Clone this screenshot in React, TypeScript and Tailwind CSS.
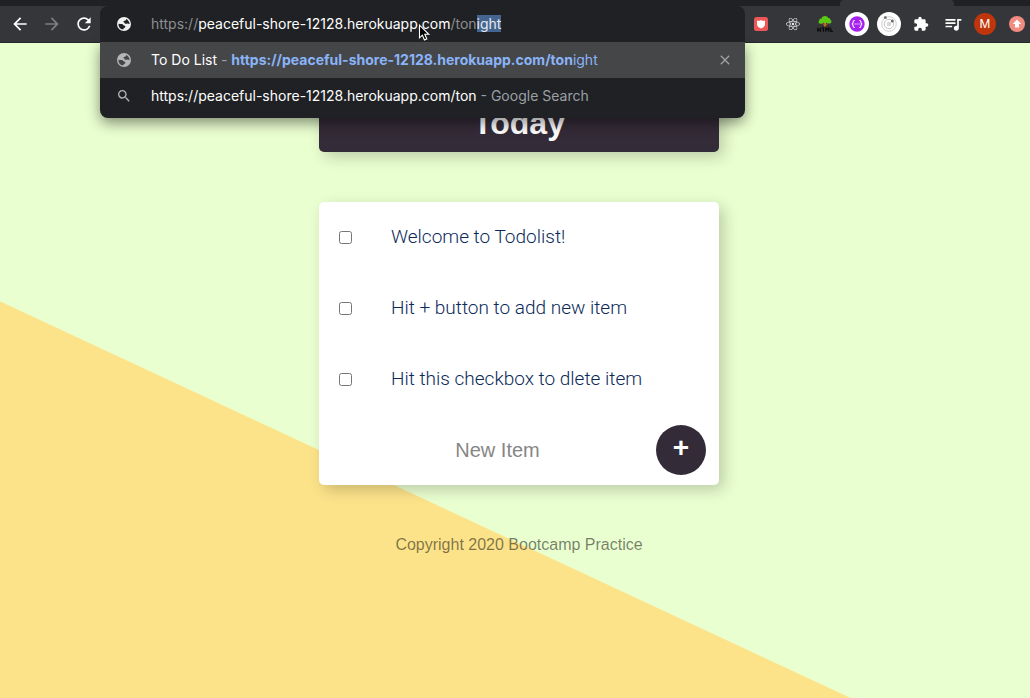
import { useState, type ReactNode } from "react";
import {
  MdArrowBack,
  MdArrowForward,
  MdClose,
  MdExtension,
  MdQueueMusic,
  MdRefresh,
  MdSearch,
} from "react-icons/md";
import { FaReact } from "react-icons/fa";

const ITEMS = [
  "Welcome to Todolist!",
  "Hit + button to add new item",
  "Hit this checkbox to dlete item",
];

function ToolButton({ label, children }: { label: string; children: ReactNode }) {
  return (
    <button
      type="button"
      aria-label={label}
      className="flex h-9 w-8 shrink-0 items-center justify-center text-white"
    >
      {children}
    </button>
  );
}

function GlobeIcon({ className }: { className: string }) {
  return (
    <svg width="16" height="16" viewBox="0 0 16 16" className={className}>
      <path
        fillRule="evenodd"
        fill="currentColor"
        d="M8 1a7 7 0 1 0 0 14A7 7 0 0 0 8 1Zm2 1.900c2.100.8 3.500 2.700 3.600 5-.7.300-1.300-.4-2-.5-.8 0-1.300.5-2.200.3-.9-.3-.8-1.200-1.500-1.500-.6-.3-.6-1 0-1.300.6-.4 1.400-.2 1.900-.7.4-.4.200-.9.200-1.300ZM2.500 7.700c1.100.2 2.200.1 3.400.3 1.200.3 1.300 1.300 2.200 1.500.9.100 1.400.5 1.200 1.400-.2.800-1.100.9-1.600 1.400-.3.400-.2.900-.4 1.300A5.700 5.700 0 0 1 2.500 7.700Z"
      />
    </svg>
  );
}

function ShieldIcon() {
  return (
    <svg width="14" height="14" viewBox="0 0 14 14">
      <rect width="14" height="14" rx="2.5" fill="#ef5658" />
      <path d="M3 3.600 5 4l2-1 2 1 2-.4v4C11 9.500 9 10.700 7 11.600 5 10.700 3 9.500 3 7.600Z" fill="#fff" />
    </svg>
  );
}

function TreeIcon() {
  return (
    <svg width="18" height="18" viewBox="0 0 18 18">
      <path d="M8 7h2.200l-.3 5 1.900 1.800H6.600L8.300 12Z" fill="#c9701c" />
      <path d="m6 7.500 2.500 3M12.500 7.500l-2.500 3" stroke="#b5621a" />
      <path
        d="M9 1C7 1 5.800 2.100 5.500 3.500 3.800 3.600 3 4.600 3.200 5.800 2.200 6.500 2.300 8.600 4.300 8.800c1.400.2 2-.6 3-1 1.300.6 2.600.6 3.600 0 1.400 1.200 3.600 1 4.300-.4.6-1.200 0-2.200-.9-2.600C14.400 3.600 13.400 2.900 12.300 3 11.800 1.700 10.600 1 9 1Z"
        fill="#5cc815"
      />
      <path
        d="M1.800 12.800v4m2.600-4v4m-2.600-2h2.600m1.300-2h3.400m-1.700 0v4m2.400 0v-4l1.500 1.700 1.500-1.700v4m2-4v3.500h2.200"
        stroke="#0c0c0e"
        strokeWidth="1.300"
        fill="none"
      />
    </svg>
  );
}

function BracesIcon() {
  return (
    <svg width="24" height="24" viewBox="0 0 24 24">
      <circle cx="12" cy="12" r="12" fill="#fff" />
      <circle cx="12" cy="12" r="7.700" fill="#a421ef" />
      <path
        d="M9.800 8.500c-1.500 0-1.700.6-1.700 1.600 0 1.200-.3 1.700-1.300 1.900 1 .2 1.300.7 1.300 1.900 0 1 .2 1.600 1.700 1.600m4.400-7c1.500 0 1.700.6 1.700 1.600 0 1.200.3 1.700 1.300 1.900-1 .2-1.300.7-1.300 1.900 0 1-.2 1.600-1.700 1.600"
        stroke="#fff"
        strokeWidth="1.100"
        fill="none"
      />
      <path d="M9.500 12h1.200m.8 0h1.200m.8 0h1.200" stroke="#fff" strokeWidth="1.200" />
    </svg>
  );
}

function OrbitIcon() {
  return (
    <svg width="24" height="24" viewBox="0 0 24 24">
      <circle cx="12" cy="12" r="12" fill="#fff" />
      <circle cx="12" cy="12" r="7.300" fill="none" stroke="#cfcfcf" />
      <circle cx="12" cy="12" r="4.700" fill="none" stroke="#c4c4c4" />
      <circle cx="12" cy="12" r="2.300" fill="#d6d6d6" />
      <circle cx="8.300" cy="5.600" r="1.500" fill="#777" />
      <circle cx="15.300" cy="9" r="1.500" fill="#6a6a6a" />
    </svg>
  );
}

function UpdateIcon() {
  return (
    <svg width="16" height="16" viewBox="0 0 16 16">
      <circle cx="8" cy="8" r="8" fill="#f28b82" />
      <path d="M8 3.500 12.200 8H10v3.500H6V8H3.800Z" fill="#fff" />
    </svg>
  );
}

function Pointer() {
  return (
    <svg
      className="pointer-events-none absolute top-[18px] left-[318px] z-20"
      width="13"
      height="18"
      viewBox="0 0 13 18"
    >
      <path
        d="M1.500 1.200v12.600l2.900-2.700 2 4.900 2.400-1-2-4.700h4Z"
        fill="#000"
        stroke="#fff"
        strokeWidth="1.100"
      />
    </svg>
  );
}

function AddressBar() {
  const [url, setUrl] = useState("https://peaceful-shore-12128.herokuapp.com/tonight");
  const parts = /^(https:\/\/)([^/]*)(\/ton)?(.*)$/.exec(url) ?? ["", "", url, "", ""];

  return (
    <div className="relative min-w-0 flex-1 text-sm">
      <div className="relative z-10 flex h-9 items-center rounded-t-lg bg-[#202124] pr-3 pl-4">
        <GlobeIcon className="shrink-0 text-[#f1f1f1]" />
        <div className="ml-[19px] grid flex-1 items-center">
          <div aria-hidden="true" className="col-start-1 row-start-1 whitespace-pre text-[#8d8e91]">
            {parts[1]}
            <span className="text-white">{parts[2]}</span>
            {parts[3]}
            <span className="bg-[#44658f] text-[#e8eaed]">{parts[4]}</span>
          </div>
          <input
            aria-label="Address and search bar"
            value={url}
            onChange={(e) => setUrl(e.target.value)}
            className="col-start-1 row-start-1 w-full bg-transparent text-transparent caret-white outline-none"
          />
        </div>
      </div>
      <ul className="absolute inset-x-0 top-9 rounded-b-lg bg-[#202124] pb-1 shadow-[0_5px_14px_rgba(0,0,0,0.45)]">
        <li className="flex h-9 items-center bg-[#454648] pr-3 pl-4">
          <GlobeIcon className="shrink-0 text-[#b4b5b6]" />
          <a href="#todo" className="ml-[19px] flex-1 whitespace-pre text-white">
            To Do List<span className="text-[#9aa0a6]"> - </span>
            <span className="text-[#8ab4f8]">
              <b>https://peaceful-shore-12128.herokuapp.com/ton</b>ight
            </span>
          </a>
          <button type="button" aria-label="Remove suggestion" className="text-[#a0a1a3]">
            <MdClose size={16} />
          </button>
        </li>
        <li className="flex h-9 items-center pr-3 pl-4">
          <MdSearch size={16} className="shrink-0 text-[#b4b5b6]" />
          <a href="#search" className="ml-[19px] flex-1 whitespace-pre text-white">
            https://peaceful-shore-12128.herokuapp.com/ton
            <span className="text-[#9aa0a6]"> - Google Search</span>
          </a>
        </li>
      </ul>
      <Pointer />
    </div>
  );
}

function BrowserBar() {
  return (
    <header className="relative z-10 border-b border-[#28252b] bg-[#35363a] font-['Inter',sans-serif]">
      <div className="flex h-[6px] justify-end bg-[#202124]">
        <div className="mr-[76px] w-[114px] rounded-t-sm bg-[#35363a]" />
      </div>
      <div className="flex h-9 pl-1">
        <ToolButton label="Back"><MdArrowBack size={20} /></ToolButton>
        <ToolButton label="Forward"><MdArrowForward size={20} className="text-[#7d7f83]" /></ToolButton>
        <ToolButton label="Reload"><MdRefresh size={20} /></ToolButton>
        <AddressBar />
        <ToolButton label="Shield"><ShieldIcon /></ToolButton>
        <ToolButton label="React tools"><FaReact size={14} className="text-[#e3e4e5]" /></ToolButton>
        <ToolButton label="HTML tree"><TreeIcon /></ToolButton>
        <ToolButton label="JSON viewer"><BracesIcon /></ToolButton>
        <ToolButton label="Orbit"><OrbitIcon /></ToolButton>
        <ToolButton label="Extensions"><MdExtension size={16} /></ToolButton>
        <ToolButton label="Media"><MdQueueMusic size={20} /></ToolButton>
        <ToolButton label="Profile">
          <span className="flex size-[22px] items-center justify-center rounded-full bg-[#bf360c] text-xs">
            M
          </span>
        </ToolButton>
        <button type="button" aria-label="Update" className="w-[29px] shrink-0 pl-2">
          <UpdateIcon />
        </button>
      </div>
    </header>
  );
}

export default function App() {
  return (
    <div className="flex min-h-screen flex-col">
      <BrowserBar />
      <main className="flex flex-1 flex-col items-center bg-[linear-gradient(25deg,#fce38a_359px,#eaffd0_360px)] pr-4 pl-6 font-['Liberation_Sans',Arial,sans-serif]">
        <div className="w-full max-w-[400px] rounded-b-[5px] bg-[#342b38] pt-[60px] pb-[9px] text-center shadow-[5px_5px_15px_rgba(0,0,0,0.2)]">
          <h1 className="text-[32px] leading-10 font-bold text-white">Today</h1>
        </div>
        <form
          onSubmit={(e) => e.preventDefault()}
          className="mt-[50px] w-full max-w-[400px] rounded-[5px] bg-white shadow-[5px_5px_15px_rgba(0,0,0,0.2)]"
        >
          {ITEMS.map((item) => (
            <label
              key={item}
              className="flex h-[71px] items-center border-b border-white pl-5 font-['Roboto',sans-serif] text-[19px] font-light text-[#0b2a5b]"
            >
              <input type="checkbox" className="mr-[39px] size-[13px] shrink-0" />
              {item}
            </label>
          ))}
          <div className="flex h-[70px] items-center pr-[13px] pl-5">
            <input
              aria-label="New Item"
              placeholder="New Item"
              className="min-w-0 flex-1 text-center text-xl outline-none placeholder:text-[#868686]"
            />
            <button
              type="submit"
              aria-label="Add item"
              className="size-[50px] shrink-0 rounded-full bg-[#342b38] pb-1 text-[28px] leading-none font-bold text-white"
            >
              +
            </button>
          </div>
        </form>
        <footer className="mt-12 text-base text-black/50">Copyright 2020 Bootcamp Practice</footer>
      </main>
    </div>
  );
}
